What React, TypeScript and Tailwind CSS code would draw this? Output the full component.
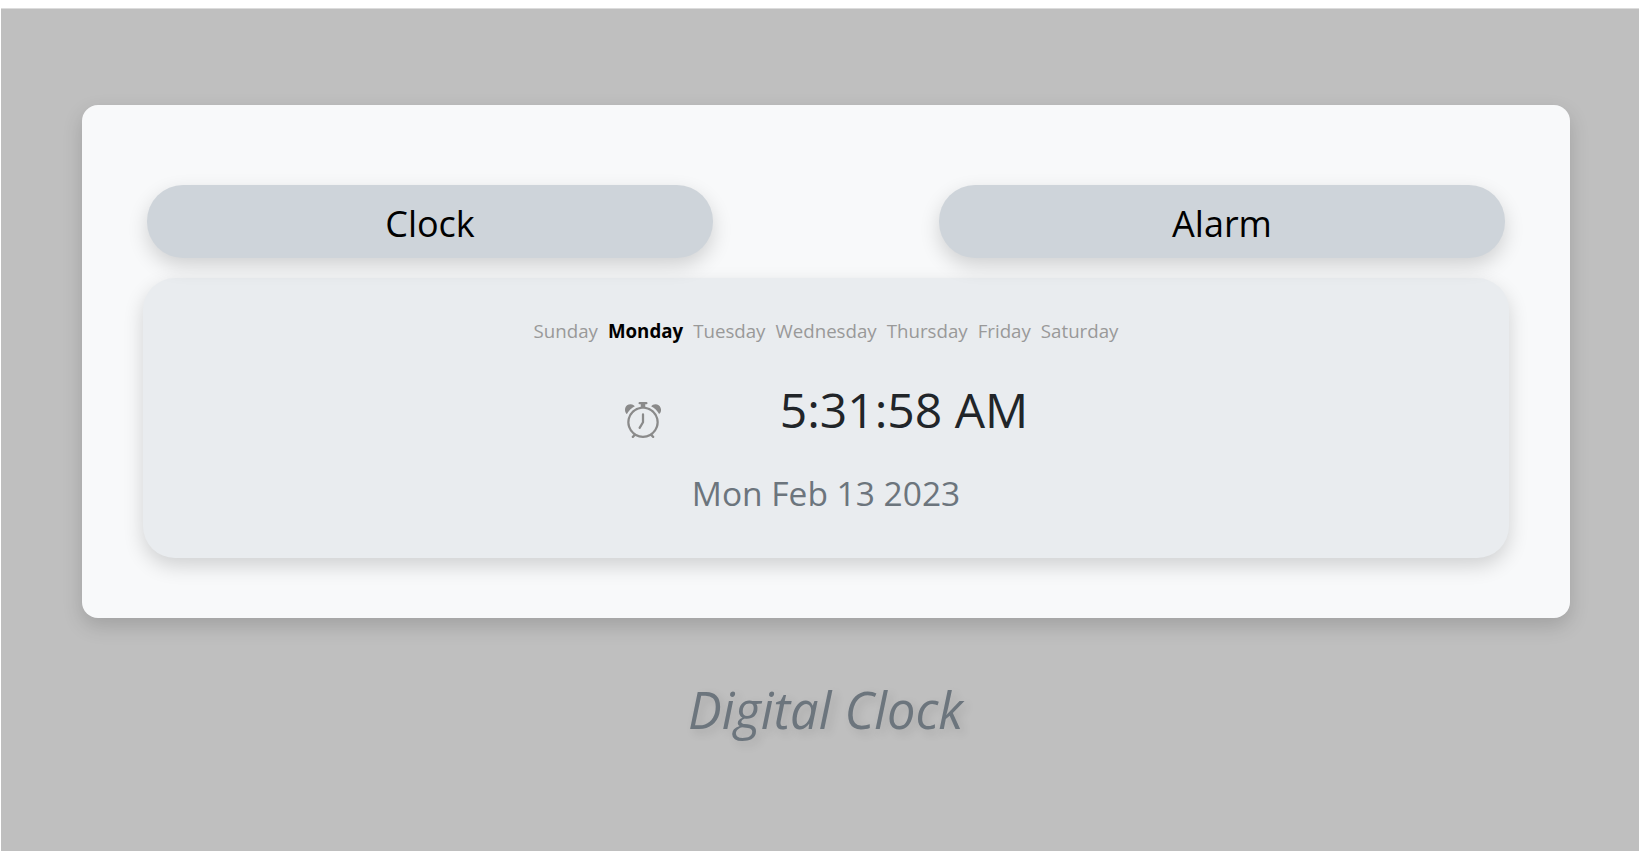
import { BsAlarm } from "react-icons/bs";

const days = ["Sunday", "Monday", "Tuesday", "Wednesday", "Thursday", "Friday", "Saturday"];

function TabButton({ label }: { label: string }) {
  return (
    <button className="w-[566px] h-[73px] rounded-[36px] bg-[#ced4da] pt-1 text-black text-[36px] leading-[69px] text-center shadow-[0_8px_20px_rgba(0,0,0,0.16)]">
      {label}
    </button>
  );
}

export default function App() {
  return (
    <div className="h-[851px] overflow-hidden bg-white pt-2 pl-px font-['Open_Sans',sans-serif]">
      <div className="h-full bg-[#bfbfbf] border-t border-[#dcdcdc] pt-[96px] pl-[81px]">
        <div className="w-[1488px] h-[513px] rounded-2xl bg-[#f8f9fa] pt-20 pl-[61px] shadow-[0_8px_20px_rgba(0,0,0,0.16)]">
          <div className="flex gap-[226px] pl-[4px]">
            <TabButton label="Clock" />
            <TabButton label="Alarm" />
          </div>
          <div className="w-[1366px] h-[280px] mt-5 rounded-[32px] bg-[#e9ecef] pt-[38px] flex flex-col items-center shadow-[0_8px_20px_rgba(0,0,0,0.16)]">
            <div className="flex gap-[10px] text-[18.7px] leading-[30px] text-[#999]">
              {days.map((d) => (
                <span key={d} className={d === "Monday" ? "font-bold text-black" : ""}>
                  {d}
                </span>
              ))}
            </div>
            <div className="flex items-center justify-center gap-[119px] pl-px mt-[28px] text-[#212529]">
              <BsAlarm className="w-[36px] h-[36px] mt-[20px] text-[#8a8a8a]" />
              <span className="text-[48px] leading-[72px]">5:31:58 AM</span>
            </div>
            <div className="mt-[20px] text-[33.5px] leading-[54px] text-[#6c757d]">Mon Feb 13 2023</div>
          </div>
        </div>
        <h1 className="mt-[56px] pr-[70px] text-center italic font-normal text-[50.5px] leading-[72px] text-[#6c757d] [text-shadow:4px_4px_10px_rgba(0,0,0,0.13)]">
          Digital Clock
        </h1>
      </div>
    </div>
  );
}
